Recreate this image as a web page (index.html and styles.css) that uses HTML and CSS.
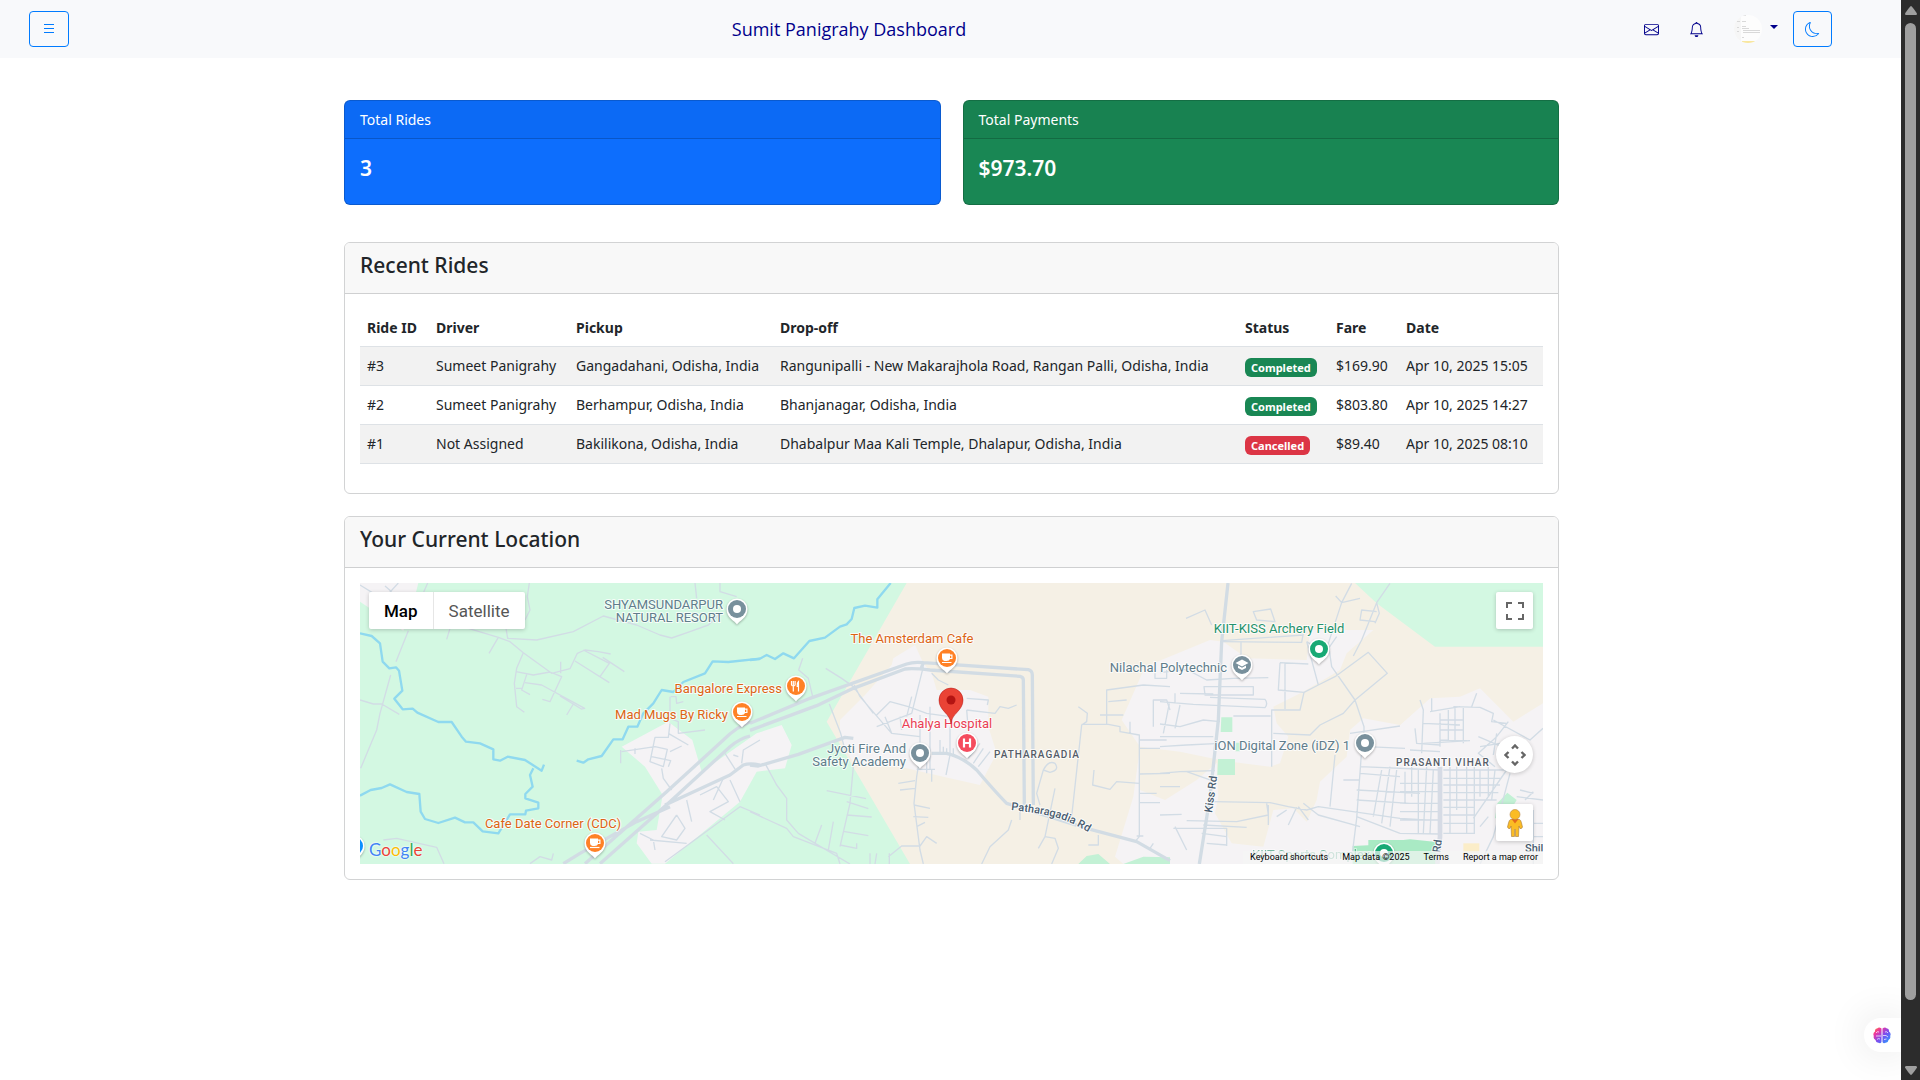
FILE: index.html
```html
<!DOCTYPE html>
<html lang="en">
<head>
<meta charset="utf-8">
<meta name="viewport" content="width=device-width, initial-scale=1">
<title>Sumit Panigrahy Dashboard</title>
<link rel="stylesheet" href="styles.css">
</head>
<body>
<div class="page">
  <header class="topbar">
    <button class="outline-btn menu-btn" type="button" aria-label="Toggle menu">
      <svg width="12" height="12" viewBox="0 0 12 12" aria-hidden="true"><path d="M1 1.5h10M1 5.500h10M1 9.500h10" stroke="currentColor" fill="none"/></svg>
    </button>
    <a class="brand" href="#">Sumit Panigrahy Dashboard</a>
    <nav class="actions" aria-label="Account">
      <a class="icon-link" href="#" aria-label="Messages">
        <svg width="15" height="15" viewBox="0 0 16 16" fill="currentColor" aria-hidden="true"><path d="M0 4a2 2 0 0 1 2-2h12a2 2 0 0 1 2 2v8a2 2 0 0 1-2 2H2a2 2 0 0 1-2-2zm2-1a1 1 0 0 0-1 1v.217l7 4.200 7-4.200V4a1 1 0 0 0-1-1zm13 2.383-4.708 2.825L15 11.105zm-.034 6.876-5.640-3.471L8 9.583l-1.326-.795-5.640 3.470A1 1 0 0 0 2 13h12a1 1 0 0 0 .966-.741M1 11.105l4.708-2.897L1 5.383z"/></svg>
      </a>
      <a class="icon-link" href="#" aria-label="Notifications">
        <svg width="15" height="15" viewBox="0 0 16 16" fill="currentColor" aria-hidden="true"><path d="M8 16a2 2 0 0 0 2-2H6a2 2 0 0 0 2 2M8 1.918l-.797.161A4 4 0 0 0 4 6c0 .628-.134 2.197-.459 3.742-.160.767-.376 1.566-.663 2.258h10.244c-.287-.692-.502-1.490-.663-2.258C12.134 8.197 12 6.628 12 6a4 4 0 0 0-3.203-3.920zM14.220 12c.223.447.481.801.780 1H1c.299-.199.557-.553.780-1C2.680 10.200 3 6.880 3 6c0-2.420 1.720-4.440 4.005-4.901a1 1 0 1 1 1.990 0A5 5 0 0 1 13 6c0 .880.320 4.200 1.220 6"/></svg>
      </a>
      <button class="profile-btn" type="button" aria-label="Profile menu">
        <svg width="28" height="28" viewBox="0 0 28 28" aria-hidden="true">
          <defs><clipPath id="avatar"><circle cx="14" cy="14" r="14"/></clipPath></defs>
          <g clip-path="url(#avatar)"><path fill="#fdfdfd" d="M0 0h28v28H0z"/><path fill="#f6f6f6" d="M0 0h7v28H0z"/><path stroke="#d9d9d9" d="M8 .5h4M8 6.500h4M8 11.500h4M8 13.500h7M9 15.500h17M9 17.500h17M3 6.500h3M3 12.500h2M3 16.500h2M8 22.500h2"/><path stroke="#f8e7a0" stroke-width="2" d="M8 27h13"/></g>
        </svg>
        <span class="caret"></span>
      </button>
      <button class="outline-btn" type="button" aria-label="Dark mode">
        <svg width="15" height="15" viewBox="0 0 16 16" fill="currentColor" aria-hidden="true"><path d="M6 .278a.77.77 0 0 1 .08.858 7.200 7.200 0 0 0-.878 3.460c0 4.021 3.278 7.277 7.318 7.277q.792-.001 1.533-.16a.79.79 0 0 1 .810.316.73.73 0 0 1-.031.893A8.350 8.350 0 0 1 8.344 16C3.734 16 0 12.286 0 7.710 0 4.266 2.114 1.312 5.124.060A.75.75 0 0 1 6 .278M4.858 1.311A7.270 7.270 0 0 0 1.025 7.710c0 4.020 3.279 7.276 7.319 7.276a7.320 7.320 0 0 0 5.205-2.162q-.506.063-1.029.063c-4.610 0-8.343-3.714-8.343-8.290 0-1.167.242-2.278.681-3.286"/></svg>
      </button>
    </nav>
  </header>

  <main class="container">
    <section class="stats">
      <article class="stat stat-blue">
        <h2 class="stat-title">Total Rides</h2>
        <p class="stat-value">3</p>
      </article>
      <article class="stat stat-green">
        <h2 class="stat-title">Total Payments</h2>
        <p class="stat-value">$973.70</p>
      </article>
    </section>

    <section class="card rides">
      <h2 class="card-title">Recent Rides</h2>
      <div class="card-body">
        <table class="rides-table">
          <colgroup><col class="c-id"><col class="c-driver"><col class="c-pickup"><col><col class="c-status"><col class="c-fare"><col class="c-date"></colgroup>
          <thead>
            <tr><th scope="col">Ride ID</th><th scope="col">Driver</th><th scope="col">Pickup</th><th scope="col">Drop-off</th><th scope="col">Status</th><th scope="col">Fare</th><th scope="col">Date</th></tr>
          </thead>
          <tbody>
            <tr><td>#3</td><td>Sumeet Panigrahy</td><td>Gangadahani, Odisha, India</td><td>Rangunipalli - New Makarajhola Road, Rangan Palli, Odisha, India</td><td><span class="badge done">Completed</span></td><td>$169.90</td><td>Apr 10, 2025 15:05</td></tr>
            <tr><td>#2</td><td>Sumeet Panigrahy</td><td>Berhampur, Odisha, India</td><td>Bhanjanagar, Odisha, India</td><td><span class="badge done">Completed</span></td><td>$803.80</td><td>Apr 10, 2025 14:27</td></tr>
            <tr><td>#1</td><td>Not Assigned</td><td>Bakilikona, Odisha, India</td><td>Dhabalpur Maa Kali Temple, Dhalapur, Odisha, India</td><td><span class="badge cancelled">Cancelled</span></td><td>$89.40</td><td>Apr 10, 2025 08:10</td></tr>
          </tbody>
        </table>
      </div>
    </section>

    <section class="card">
      <h2 class="card-title">Your Current Location</h2>
      <div class="card-body">
        <div class="map">
          <svg class="map-layer" viewBox="0 0 3549 843" preserveAspectRatio="xMidYMid slice" aria-hidden="true">
            <path fill="#f5f0e5" d="M0 0h3549v843H0z"/>
            <path fill="#d3f8e2" d="M0 0H1640L1400 416L1650 843H0zM2985 0L3050 61L3225 191H3549V0z"/>
            <g fill="#f5f3f5">
              <path d="M0 0H175L165 40L130 143L0 56z"/>
              <path transform="translate(-60 -249)" d="M845 740L985 665L1057 720L1085 815L1250 700L1325 675L1355 735L1335 805L1250 815L1200 905L975 1091H935L890 1030L895 995L950 990L968 885L915 800z"/>
              <path transform="translate(1170 -39)" d="M270 450L345 375L425 285L430 265L495 225L520 280L545 310L560 360H660L715 380V470L740 550L690 645L600 625L450 590L310 580L270 500z"/>
              <path transform="translate(2400 -39)" d="M-45 290L150 210L190 215L260 265L440 270L450 180H640L720 465L810 385L900 380L960 355L1060 455L1149 400V882H-110L-135 860L-80 680L-60 530L-115 450z"/>
            </g>
            <g fill="#f5f0e5" transform="translate(2400 -39)">
              <path d="M340 410L430 365L540 300L560 250L640 180L960 355L810 385L720 465L610 445L570 480L560 560L480 635L470 690L440 755L400 715L340 720L310 830L215 820L165 730L175 680L170 570L330 590L360 580L385 500L350 460z"/>
              <path d="M-60 530L60 545L180 570L110 630L15 690L-60 660z"/>
            </g>
            <g fill="#c3f1d5">
              <path transform="translate(1170 -39)" d="M985 882L1010 858L1045 852L1080 882zM1120 882L1180 860L1260 862V882z"/>
              <path transform="translate(2400 -39)" d="M184 442h33v44h-35zM174 567h51v48h-53zM228 518h12v26h-14zM1042 668L1070 690L1040 740L1005 745L1012 700z"/>
              <path transform="translate(2400 -39)" fill="#a9eac4" d="M578 828L625 826V810H730L750 808L830 816V882H578z"/>
              <path transform="translate(2400 -39)" fill="#fbedc8" d="M910 820h48v28h-48z"/>
            </g>

            <g fill="none" stroke="#8fd9ef" stroke-width="7" stroke-linejoin="round">
              <path transform="translate(-60 -249)" d="M60 400L95 408L120 430L128 485L148 505L168 502L177 512L187 572L163 596L188 628L218 626L232 638L295 666L335 666L365 710L378 725L420 730L460 748V778L480 782L503 770L555 780L605 812L612 794M580 805L570 825L578 860L556 882V895L595 908V925L558 932L556 943H510L475 1000L428 994L400 967H375L345 953L295 969L255 957L242 935L238 882L200 876L150 853L125 864L92 870L60 887M710 782L730 788L745 778L785 768L820 718H848L865 680H892L910 640L940 610L965 570L1000 576L1030 546L1095 520L1118 484L1165 486L1260 476"/>
              <path transform="translate(1170 -39)" d="M0 270L28 267L50 255L75 267L100 250L132 265L178 213L225 203L270 170L290 163L305 147L313 114L345 107L382 113V88L422 39"/>
            </g>

            <g fill="none" stroke="#d2dce5" stroke-width="4" stroke-linejoin="round">
              <path transform="translate(-60 -249)" d="M60 255L130 298L175 249M135 258L155 275M205 392L168 485M152 525L120 640L110 690L62 805M60 600L100 612L125 612L178 643M263 249L245 290M568 249L562 290L570 330L555 360M498 385L503 415L590 420L700 395L790 348L890 375L960 405L995 414L1050 395L1105 375L1140 340M1065 249L1070 295M1140 249V275L1190 290M330 385L320 418M385 385L475 412L447 460M475 412L510 425L550 458L635 520L690 506L712 460L735 450L775 455L812 462M550 458L530 505L523 550L530 620L553 637M528 515L580 525L630 516L665 530L630 605L607 598M560 524L545 570L570 584M528 565H548M555 548L605 555L734 625L724 627L660 588M724 627L700 612L680 645M662 485V520M730 450L808 490L780 530M705 483L808 548M788 472L853 515M845 755L945 740L982 748L970 800L930 785L945 712H985L990 670M842 750V790M885 745V762M935 770L992 782L985 800M985 700L1045 735M990 755L1025 738M965 805L970 835L995 870M990 590V655L1015 665V700L1095 690M992 590H1008L1010 610L1030 605M1040 900L1055 965M1010 945L965 1010L1010 1020L1035 985L1010 945M900 1000L940 1020L945 1050M930 1020L1040 1030M975 1085L1200 920L1260 945M1100 1005L1180 1091M1155 760L1190 815M1205 790L1210 750L1260 720M1080 885L1130 860L1165 905L1110 935L1155 960M1150 835L1120 900M1170 840L1200 905M1195 770L1180 765M130 1020L170 1015L290 1042L312 1091M570 1091L600 1070L635 1080L640 1060"/>
              <path transform="translate(1170 -39)" d="M158 265L146 300L175 325L188 380M227 295L275 325L310 350L370 430M238 402L272 490L285 540M310 350L315 360M313 345L330 380L425 490L510 500M520 290L500 370L485 430L380 470M545 310L565 330L595 345M380 435L420 395L475 410L530 430L600 440M405 440L425 490M450 440L455 480M485 380L470 440M510 435V560L500 620L492 700L510 840L520 882M540 410V600M570 510V550M580 530V555M590 535V555M600 540V555M610 535V560M600 470V555L588 615M650 385L715 390L712 405M650 420L735 430L750 410L775 415L800 405M650 420L655 480M670 580L700 535M685 590L720 545M655 565L690 520M530 550V610M500 598H555M545 600V635M445 640L495 632M450 660L495 655M490 740L535 742M500 770L525 757M45 580L80 645L110 685V750L145 790L300 882M0 725L110 775L130 800L260 850L270 882M310 590L300 700L270 830M230 662L348 686M290 695L355 716M290 735L365 741M280 784L355 797M270 825L320 835V820M215 765L195 820M250 755L235 840M360 850V882M380 850L375 882M415 860L455 828H510L530 800L560 820M418 850V882M492 705L540 715M785 750L775 780L720 830L695 882M810 705V750M915 655L885 800L865 835M870 705L860 670L880 600Q895 570 915 580Q930 600 900 607L880 600M885 800L915 805L925 835L905 882M985 410L1012 430L1010 455L995 465L965 740M995 463H1075L1110 470V485L1168 495V800L1155 815M1050 435H1120M1070 462V360L1180 345L1260 350M1075 395L1130 390M1032 600L1028 645L1080 658L1100 635L1168 640M1168 612L1260 610M1168 510H1250M1168 535H1230M1168 670H1220M1168 698H1230M1200 835L1210 820M1160 798H1180M1045 795V825H1015M1140 455V490M1210 470V390H1250L1260 420M1215 310V325H1250V300"/>
              <path transform="translate(2400 -39)" d="M78 145L135 120L155 165M185 215L425 217L430 190M280 125L332 117L345 155L290 150zM185 212L430 195M243 215V265M527 78L545 98L600 85M575 40L545 98L505 220L515 290L585 390L612 470V490M690 40L650 98L605 210L580 258M650 98L658 130L645 160M650 125L605 120L600 150L645 155M440 215L475 345M530 200L495 250L440 215M360 278L355 360L432 367L475 345L525 320L625 247L682 310L585 390L550 430L480 465L450 495L340 490M375 280V417M432 367L420 420H335V590M360 278L445 282M0 308L80 298L140 330L220 325L325 323M132 350H280V375H135zM60 370L160 372M0 395L100 403L315 413Q325 400 315 388L150 382M45 370V400M0 462L60 470L130 450L180 455M28 400L10 490M60 405L45 475M220 438H332M0 500H160M0 530L80 525L180 520M0 610L60 605L165 602M0 650H60M80 605L165 635M160 695L330 698L385 710L440 720L475 710L720 745L800 750M430 700L475 735L600 770M80 752L230 755L325 735L320 700M130 765L260 772M0 735L65 733M40 775H200V828M125 790L200 800M140 820L200 825M45 770L80 840M325 705L325 765M415 710L445 750M350 740L380 720M385 765L410 712M525 555L510 710M605 540L590 745L577 850M550 630H600M570 490L720 468M620 530L735 535M600 590L840 600M600 610L720 620M590 660L780 670M590 690L750 700M590 740L720 790M665 600L640 740M690 590L665 760M710 600L690 770M735 605V700M755 590V680M775 600V790M800 590L790 790M820 600L810 790M720 640H840M720 665H840M720 700H840M720 725H840M720 750H840M720 790L840 792M780 390L790 420L785 550M815 385V425M750 540L840 545M765 475L770 520L840 525M790 460L900 465M810 425L900 410M840 430V530M865 420V510M885 415V510M910 410V520M840 450H910M840 480H910M840 510L920 512M790 520L930 512M880 410L960 412L1000 430L995 455L1040 460M950 370L935 410M850 600H1040M850 625H1025M850 645H1020M850 668H1015M850 690H1010M850 712H945M850 735H945M850 760H945M850 790H945M870 590V790M890 590V720M920 590V790M943 590V790M960 600V680M985 590V680M1005 600L995 690M940 745L1040 600M1045 455L1010 500L955 550L1005 590M1010 490L1000 555M955 500L1060 545M1000 450L1110 510L1149 475M1020 520L960 530M1050 610L1000 800L960 882M1070 680L1149 690M1080 660L1120 670M1120 720V882M1149 760H1120M1120 800H1149M1095 690L1120 665M985 740L960 770"/>
            </g>
            <g fill="none" stroke="#d2dce4" stroke-width="10" stroke-linejoin="round">
              <path transform="translate(-60 -249)" d="M780 1091L990 905L1170 740Q1200 715 1230 708M735 1091L975 880L1150 720Q1190 680 1230 666M975 915L1170 825L1210 795Q1230 788 1260 795M670 1091L720 1060L890 965L990 920"/>
              <path transform="translate(1170 -39)" d="M0 460L180 385L470 282Q490 275 520 278L835 299Q847 302 847 315L850 705M0 481L200 407L310 355L465 297Q490 294 540 300L810 319Q820 321 820 330L823 705M520 278L512 300M0 585L25 588L145 553L285 502L310 505M545 550H590Q640 562 680 600Q740 670 770 700L1010 775L1160 815L1260 872"/>
              <path transform="translate(2400 -39)" d="M204 39L185 215L175 450L150 680L118 882"/>
              <path transform="translate(2400 -39)" stroke-width="14" stroke="#d6dbe5" d="M840 590V800L832 882"/>
            </g>
          </svg>

          <svg class="map-layer map-labels" viewBox="0 0 1183 281" preserveAspectRatio="xMidYMid slice" role="img" aria-label="Map of Patharagadia">
            <defs>
              <path id="pin" d="M0 15.500C-2 12-10.500 9-10.500 0a10.500 10.500 0 0 1 21 0C10.500 9 2 12 0 15.500z"/>
              <g id="cup"><path d="M-5-4.500H3V-3.500H5.500V1H3Q2.500 3-.500 3H-2.500Q-5 2.500-5 0zM3-2.300V0H4.300V-2.300z" fill="#fff" fill-rule="evenodd"/><path d="M-5 4.500H4.500" stroke="#fff" stroke-width="1.200"/></g>
              <path id="rd" d="M651 227Q672 229 690 233T728 249"/>
            </defs>
            <g class="pins">
              <g transform="translate(377 26)"><use href="#pin"/><circle r="9" fill="#78909c"/><circle r="4" fill="#fff"/></g>
              <g transform="translate(436 103)"><use href="#pin"/><circle r="9" fill="#ff8126"/><path d="M-4.500-5V-1.500Q-4.500 0-2.700 0V5.500M-2.700-5V0M-.900-5V-1.500Q-.900 0-2.700 0M2.500 5.500V-4.500Q.800-3 1.200.500H2.500" stroke="#fff" stroke-width="1.200" fill="none"/></g>
              <g transform="translate(382 129)"><use href="#pin"/><circle r="9" fill="#ff8126"/><use href="#cup"/></g>
              <g transform="translate(235 260)"><use href="#pin"/><circle r="9" fill="#ff8126"/><use href="#cup"/></g>
              <g transform="translate(587 75)"><use href="#pin"/><circle r="9" fill="#ff8126"/><use href="#cup"/></g>
              <g transform="translate(607 160)"><use href="#pin"/><circle r="9" fill="#f54c5e"/><path d="M-3-4.500V4.500M3-4.500V4.500M-3 0H3" stroke="#fff" stroke-width="2.200"/></g>
              <g transform="translate(560 170)"><use href="#pin"/><circle r="9" fill="#78909c"/><circle r="4" fill="#fff"/></g>
              <g transform="translate(882 82)"><use href="#pin"/><circle r="9" fill="#78909c"/><path d="M0-5.500L6.500-2L0 1.500L-6.500-2zM-4 0.500L0 2.700L4 .500V3L0 5L-4 3z" fill="#fff"/></g>
              <g transform="translate(959 66)"><use href="#pin"/><circle r="9" fill="#18a974"/><circle r="4" fill="#fff"/></g>
              <g transform="translate(1005 160)"><use href="#pin"/><circle r="9" fill="#78909c"/><circle r="4" fill="#fff"/></g>
              <g transform="translate(1024 270)"><use href="#pin"/><circle r="9" fill="#18a974"/><circle r="4" fill="#fff"/></g>
              <g transform="translate(-6 263)"><use href="#pin"/><circle r="9" fill="#0a8fff"/></g>
            </g>
            <g class="poi">
              <g class="grey">
                <text x="363" y="26" text-anchor="end">SHYAMSUNDARPUR</text>
                <text x="363" y="39" text-anchor="end">NATURAL RESORT</text>
                <text x="546" y="170" text-anchor="end">Jyoti Fire And</text>
                <text x="546" y="183" text-anchor="end">Safety Academy</text>
                <text x="867" y="89" text-anchor="end">Nilachal Polytechnic</text>
                <text x="990" y="167" text-anchor="end">iON Digital Zone (iDZ) 1</text>
              </g>
              <g class="orange">
                <text x="422" y="110" text-anchor="end">Bangalore Express</text>
                <text x="368" y="136" text-anchor="end">Mad Mugs By Ricky</text>
                <text x="193" y="245" text-anchor="middle">Cafe Date Corner (CDC)</text>
                <text x="552" y="60" text-anchor="middle">The Amsterdam Cafe</text>
              </g>
              <text class="red" x="587" y="145" text-anchor="middle">Ahalya Hospital</text>
              <g class="green">
                <text x="919" y="50" text-anchor="middle">KIIT-KISS Archery Field</text>
                <text class="faded" x="892" y="276">KIIT Sports Complex</text>
              </g>
            </g>
            <g class="area">
              <text x="634" y="175">PATHARAGADIA</text>
              <text x="1036" y="183">PRASANTI VIHAR</text>
            </g>
            <g class="road">
              <text><textPath href="#rd">Patharagadia Rd</textPath></text>
              <text transform="translate(852 230) rotate(-82)">Kiss Rd</text>
              <text transform="translate(1080 270) rotate(-82)">Rd</text>
              <text x="1165" y="269">Shil</text>
            </g>
            <path fill="#ea4335" stroke="#b31412" stroke-width=".5" d="M591 140.500C590 130 579 128 579 117a12 12 0 0 1 24 0C603 128 592 130 591 140.500z"/>
            <circle cx="591" cy="117" r="4.500" fill="#b31412"/>
          </svg>

          <div class="map-type">
            <button class="map-tab active" type="button">Map</button>
            <button class="map-tab" type="button">Satellite</button>
          </div>
          <button class="map-ctl fullscreen" type="button" aria-label="Toggle fullscreen view">
            <svg width="18" height="18" viewBox="0 0 18 18" fill="#666" aria-hidden="true"><path d="M0 0v6h2V2h4V0zM16 0h-4v2h4v4h2V0zM16 16h-4v2h6v-6h-2zM2 12H0v6h6v-2H2z"/></svg>
          </button>
          <div class="map-side">
            <button class="map-ctl round" type="button" aria-label="Map camera controls">
              <svg width="22" height="22" viewBox="0 0 22 22" fill="none" stroke="#666" stroke-width="2.400" aria-hidden="true"><path d="M8 4.500L11 1.500L14 4.500M8 17.500L11 20.500L14 17.500M4.500 8L1.500 11L4.500 14M17.500 8L20.500 11L17.500 14"/></svg>
            </button>
            <button class="map-ctl" type="button" aria-label="Open Street View">
              <svg width="18" height="28" viewBox="0 0 18 28" aria-hidden="true"><path fill="#fbbc24" stroke="#a87b3a" stroke-width=".6" d="M4.500 10.500Q9 9 13.500 10.500Q15 11 15.500 14L16.500 18Q16 20 14 19.500L13 17L12.500 27.500H9.500V20.500H8.500V27.500H5.500L5 17L4 19.500Q2 20 1.500 18L2.500 14Q3 11 4.500 10.500z"/><path fill="#e36a1d" d="M5.500 10H12.500L9 14.500z"/><circle cx="9" cy="5.500" r="5" fill="#fbbc24" stroke="#b9884a" stroke-width=".6"/></svg>
            </button>
          </div>
          <a class="google" href="#" aria-label="Google Maps"><span class="g-blue">G</span><span class="g-red">o</span><span class="g-yellow">o</span><span class="g-blue">g</span><span class="g-green">l</span><span class="g-red">e</span></a>
          <div class="map-legal">
            <button class="legal-item" type="button">Keyboard shortcuts</button>
            <span class="legal-item">Map data ©2025</span>
            <a class="legal-item" href="#">Terms</a>
            <a class="legal-item" href="#">Report a map error</a>
          </div>
        </div>
      </div>
    </section>
  </main>

  <button class="assistant" type="button" aria-label="Assistant">
    <svg width="18" height="17" viewBox="0 0 18 17" aria-hidden="true">
      <defs><linearGradient id="brain" x1="0" y1="0" x2="1" y2="1"><stop offset="0" stop-color="#ff8a1f"/><stop offset=".25" stop-color="#f0359f"/><stop offset=".55" stop-color="#7a4df0"/><stop offset="1" stop-color="#1fa8ff"/></linearGradient></defs>
      <path fill="url(#brain)" d="M8.500 1.500Q6-.500 4.500 1.200Q1.500 1.500 2 4.500Q-.500 6.500.800 9Q0 12 2.500 13Q3 16 5.500 15.800Q7.500 17 8.500 15zM9.500 1.500Q12-.500 13.500 1.200Q16.500 1.500 16 4.500Q18.500 6.500 17.200 9Q18 12 15.500 13Q15 16 12.500 15.800Q10.500 17 9.500 15z"/>
      <path fill="none" stroke="#fff" stroke-width=".9" opacity=".8" d="M3 6Q4 4 6 5M3 9H8M4 12.500Q5 11 7 12M12 5Q14 4 15 6M10 8.500H13L15 10M11 12.500L13.500 12"/>
    </svg>
  </button>
</div>
<div class="scrollbar" aria-hidden="true">
  <svg width="12" height="9" viewBox="0 0 12 9"><path fill="#9f9f9f" d="M6 0Q7 0 12 7.500Q12 9 11 9H1Q0 9 0 7.500Q5 0 6 0z"/></svg>
  <span class="thumb"></span>
  <svg width="12" height="9" viewBox="0 0 12 9"><path fill="#9f9f9f" d="M6 9Q7 9 12 1.500Q12 0 11 0H1Q0 0 0 1.500Q5 9 6 9z"/></svg>
</div>
</body>
</html>
```
FILE: styles.css
```css
* { box-sizing: border-box; }

body {
  margin: 0;
  display: flex;
  min-height: 100vh;
  background: #fff;
  color: #212529;
  font: 14px/22px "Noto Sans", "Open Sans", sans-serif;
}

h2, p { margin: 0; }
a { color: inherit; text-decoration: none; }
button { font: inherit; color: inherit; border: 0; padding: 0; background: none; cursor: pointer; }
svg { display: block; }

.page { flex: 1; min-width: 0; }

/* Top bar */
.topbar {
  display: flex;
  align-items: center;
  justify-content: space-between;
  height: 58px;
  padding: 0 69px 0 29px;
  background: #f8f9fb;
  color: #00008b;
}
.brand { font-family: "Open Sans", sans-serif; font-size: 18px; line-height: 28px; }
.actions { display: flex; align-items: center; }
.icon-link { padding: 0 15px; }
.outline-btn {
  display: flex;
  align-items: center;
  justify-content: center;
  width: 39px;
  height: 36px;
  border: 1px solid #007bff;
  border-radius: 4px;
  color: #007bff;
}
.menu-btn { width: 40px; }
.profile-btn { display: flex; align-items: center; gap: 8px; padding: 0 15px; }
.caret { border: 4px solid transparent; border-top-color: #00008b; border-bottom: 0; margin-bottom: 4px; }

.container { max-width: 1217px; margin: 0 auto; padding: 42px 0 42px 2px; }

/* Summary tiles */
.stats { display: grid; grid-template-columns: 1fr 1fr; gap: 22px; margin-bottom: 37px; }
.stat { border: 1px solid rgba(0, 0, 0, .18); border-radius: 6px; color: #fff; height: 105px; }
.stat-blue { background: #0d6efd; }
.stat-green { background: #198754; }
.stat-title {
  padding: 8px 15px 7px;
  border-bottom: 1px solid rgba(0, 0, 0, .18);
  background: rgba(0, 0, 0, .03);
  font-size: 14px;
  font-weight: 400;
}
.stat-value { padding: 16px 15px; font-size: 21px; line-height: 27px; font-weight: 600; }

/* Cards */
.card { border: 1px solid #d2d3d4; border-radius: 6px; overflow: hidden; }
.rides { margin-bottom: 22px; }
.card-title {
  padding: 9px 15px 14px;
  border-bottom: 1px solid #cfd0d1;
  background: #f8f8f8;
  font-size: 21px;
  line-height: 27px;
  font-weight: 500;
}
.card-body { padding: 15px; }

.rides-table { width: 100%; margin-bottom: 14px; border-collapse: collapse; table-layout: fixed; }
.rides-table th, .rides-table td {
  padding: 8px 7px;
  border-bottom: 1px solid #dee2e6;
  text-align: left;
  white-space: nowrap;
}
.rides-table th { padding: 8px 7px 7px; font-weight: 700; }
.rides-table tbody tr:nth-child(odd) { background: #f2f2f2; }
.c-id { width: 69px; }
.c-driver { width: 140px; }
.c-pickup { width: 204px; }
.c-status { width: 91px; }
.c-fare { width: 70px; }
.c-date { width: 144px; }
.badge {
  display: block;
  width: fit-content;
  margin-top: 3px;
  padding: 0 6px;
  border-radius: 6px;
  color: #fff;
  font-size: 11px;
  line-height: 19px;
  font-weight: 700;
}
.done { background: #198754; }
.cancelled { background: #dc3545; }

/* Map */
.map { position: relative; height: 281px; overflow: hidden; font-family: Roboto, sans-serif; }
.map-layer { position: absolute; inset: 0; width: 100%; height: 100%; }
.map-labels text { paint-order: stroke; stroke: #fff; stroke-width: 2px; stroke-linejoin: round; stroke-opacity: .8; }
.pins use[href="#pin"] { fill: #fff; filter: drop-shadow(0 1px 1px rgba(0, 0, 0, .3)); }
.poi { font-size: 13px; }
.grey { fill: #607d8b; }
.orange { fill: #dc6414; }
.red { fill: #ea3f55; }
.green { fill: #25926b; }
.faded { opacity: .6; }
.area { font-size: 10px; font-weight: 500; letter-spacing: 1px; fill: #545b66; }
.road { font-size: 11px; font-weight: 500; fill: #4a5d70; }

.map-type {
  position: absolute;
  top: 9px;
  left: 9px;
  display: flex;
  border-radius: 2px;
  background: #fff;
  box-shadow: 0 1px 4px rgba(0, 0, 0, .2);
}
.map-tab { height: 37px; padding: 0 15px; font-size: 17px; color: #565656; }
.map-tab + .map-tab { border-left: 1px solid #e6e6e6; }
.map-tab.active { font-weight: 500; color: #000; }
.map-ctl {
  display: flex;
  align-items: center;
  justify-content: center;
  width: 37px;
  height: 37px;
  border-radius: 2px;
  background: #fff;
  box-shadow: 0 1px 4px rgba(0, 0, 0, .2);
}
.fullscreen { position: absolute; top: 9px; right: 10px; }
.map-side { position: absolute; right: 10px; bottom: 23px; display: flex; flex-direction: column; gap: 31px; }
.round { border-radius: 50%; }
.google {
  position: absolute;
  left: 9px;
  bottom: 2px;
  font: 400 17px/24px Lato, sans-serif;
  text-shadow: 0 0 2px #fff, 0 0 2px #fff;
}
.g-blue { color: #4285f4; }
.g-red { color: #ea4335; }
.g-yellow { color: #fbbc05; }
.g-green { color: #34a853; }
.map-legal {
  position: absolute;
  right: 0;
  bottom: 0;
  display: flex;
  background: rgba(245, 245, 245, .7);
  font-size: 9px;
  line-height: 13px;
  color: #000;
}
.legal-item { padding: 0 7px; line-height: 13px; }
.legal-item:last-child { padding-right: 5px; }

/* Floating assistant tab */
.assistant {
  position: fixed;
  right: 19px;
  bottom: 28px;
  width: 37px;
  height: 34px;
  padding-left: 9px;
  border-radius: 17px 0 0 17px;
  background: #fff;
  box-shadow: 0 0 40px rgba(0, 0, 0, .12);
  clip-path: inset(-60px 0 -60px -60px);
}

.scrollbar {
  position: sticky;
  top: 0;
  display: flex;
  flex-direction: column;
  align-items: center;
  gap: 8px;
  width: 19px;
  height: 100vh;
  padding: 6px 0 5px;
  background: #2c2c2c;
}
.thumb { width: 11px; flex: 1; margin-bottom: 58px; border-radius: 6px; background: #9f9f9f; }
```
